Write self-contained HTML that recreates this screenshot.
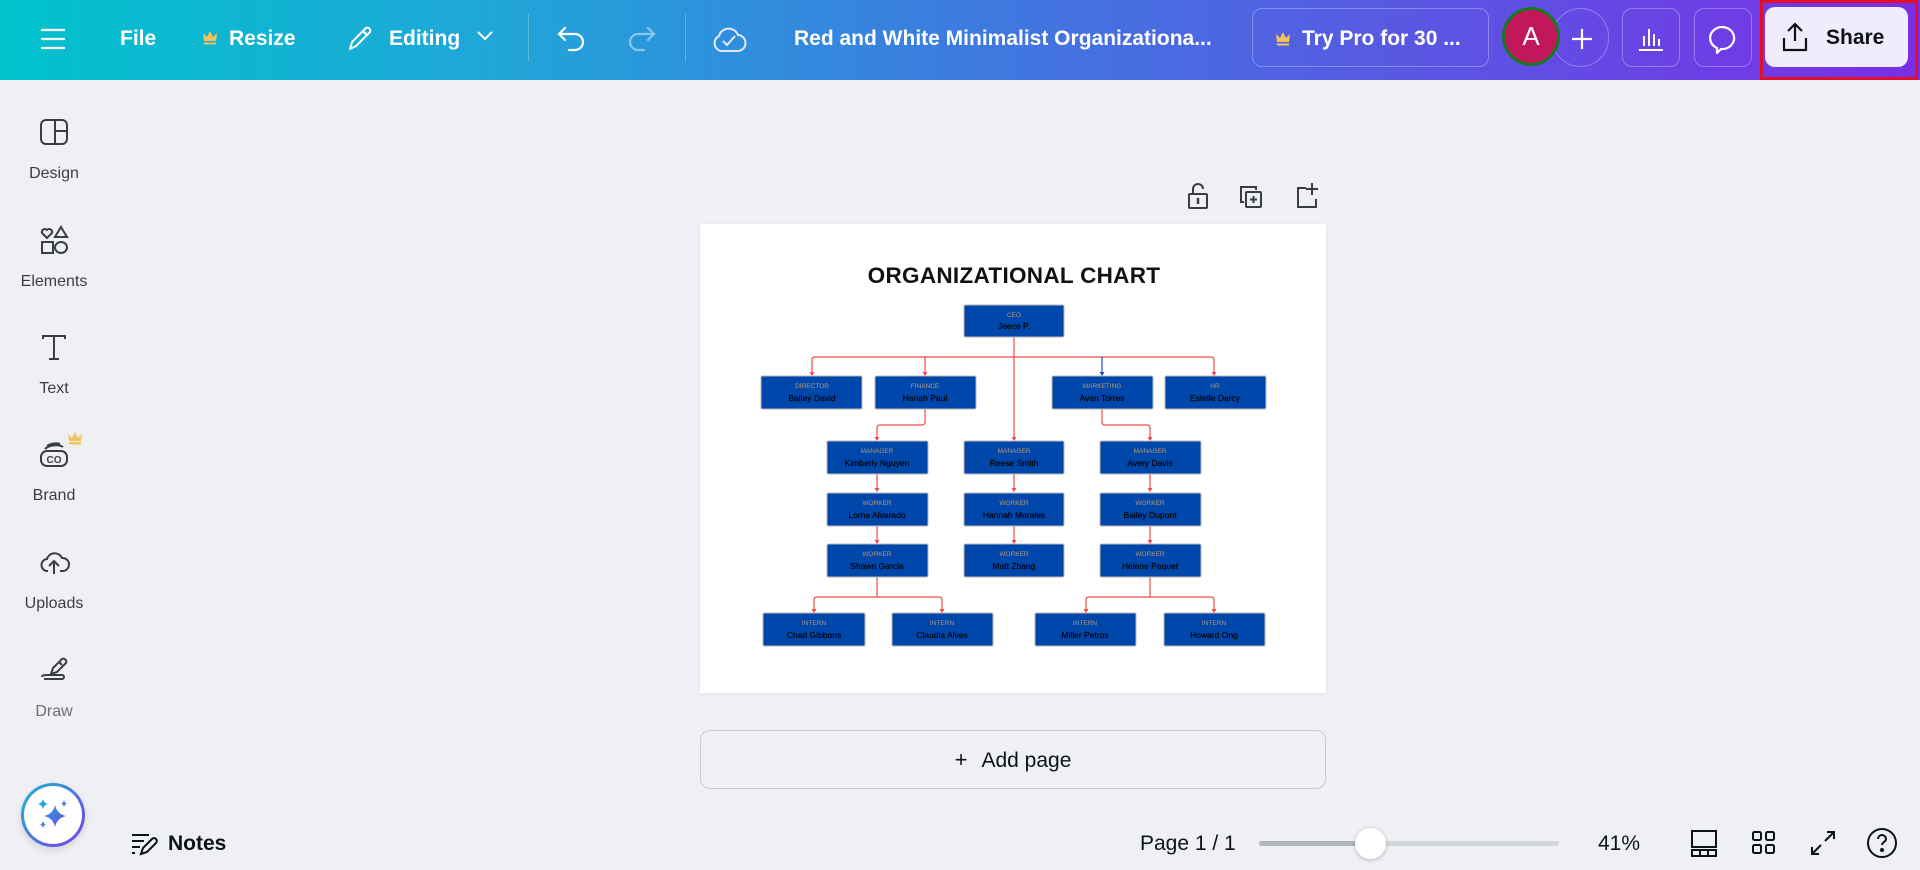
<!DOCTYPE html>
<html><head><meta charset="utf-8"><style>
*{margin:0;padding:0;box-sizing:border-box}
body{width:1920px;height:870px;overflow:hidden;background:#eff0f4;font-family:"Liberation Sans",sans-serif;position:relative;color:#0d1216}
.top{position:absolute;left:0;top:0;width:1920px;height:80px;background:linear-gradient(90deg,#00c2cc 0%,#1fa7d8 25%,#3d7be0 50%,#5b55e3 75%,#7a2ee6 100%)}
.a{position:absolute}
.tt{color:#fff;font-weight:bold;font-size:21px;top:27px}
.side{position:absolute;left:0;width:108px;text-align:center;font-size:16px;color:#3b3d45}
.side svg{display:block;margin:0 auto 17px}
.btn{position:absolute;border:1px solid rgba(255,255,255,.3);border-radius:10px}
</style></head><body>
<div class="top">
 <svg class="a" style="left:40px;top:27px" width="26" height="24" viewBox="0 0 26 24"><path d="M2 3h22M2 12h22M2 21h22" stroke="#fff" stroke-width="2.2" stroke-linecap="round"/></svg>
 <div class="a tt" style="left:120px">File</div>
 <svg class="a" style="left:201px;top:28px" width="18" height="18" viewBox="0 0 18 18"><path d="M2 5l4 4 3-6 3 6 4-4-1 8H3z" fill="#f7c15c"/><rect x="3" y="14.5" width="12" height="2" fill="#f7c15c"/></svg>
 <div class="a tt" style="left:229px">Resize</div>
 <svg class="a" style="left:345px;top:22px" width="32" height="32" viewBox="0 0 32 32"><path d="M5 27l2-7L21 6a3 3 0 014 4L11 24z M18 9l4 4" fill="none" stroke="#fff" stroke-width="2" stroke-linejoin="round"/></svg>
 <div class="a tt" style="left:389px">Editing</div>
 <svg class="a" style="left:475px;top:29px" width="20" height="14" viewBox="0 0 20 14"><path d="M3 3l7 7 7-7" fill="none" stroke="#fff" stroke-width="2"/></svg>
 <div class="a" style="left:528px;top:14px;width:1px;height:48px;background:rgba(255,255,255,.25)"></div>
 <svg class="a" style="left:555px;top:22px" width="34" height="34" viewBox="0 0 34 34"><path d="M10 6L4 12l6 6M4 12h16a8 8 0 010 16h-6" fill="none" stroke="#fff" stroke-width="2.2" stroke-linecap="round"/></svg>
 <svg class="a" style="left:624px;top:22px" width="34" height="34" viewBox="0 0 34 34"><path d="M24 6l6 6-6 6M30 12H14a8 8 0 000 16h6" fill="none" stroke="rgba(255,255,255,.45)" stroke-width="2.2" stroke-linecap="round"/></svg>
 <div class="a" style="left:685px;top:14px;width:1px;height:48px;background:rgba(255,255,255,.25)"></div>
 <svg class="a" style="left:710px;top:20px" width="38" height="38" viewBox="0 0 38 38"><path d="M11 31a8 8 0 01-2-15 10 10 0 0119-1 8 8 0 01-1 16z" fill="none" stroke="#e6e8ff" stroke-width="2"/><path d="M13 21l4 4 8-9" fill="none" stroke="#e6e8ff" stroke-width="2"/></svg>
 <div class="a tt" style="left:794px;font-size:21px">Red and White Minimalist Organizationa...</div>
 <div class="btn" style="left:1252px;top:8px;width:237px;height:59px"></div>
 <svg class="a" style="left:1274px;top:29px" width="18" height="18" viewBox="0 0 18 18"><path d="M2 5l4 4 3-6 3 6 4-4-1 8H3z" fill="#f7c15c"/><rect x="3" y="14.5" width="12" height="2" fill="#f7c15c"/></svg>
 <div class="a tt" style="left:1302px">Try Pro for 30 ...</div>
 <div class="btn" style="left:1552px;top:8px;width:57px;height:59px;border-radius:30px"></div>
 <div class="a" style="left:1502px;top:7px;width:58px;height:59px;border-radius:50%;background:#c2185b;border:3px solid #137a22;color:#fff;font-size:26px;text-align:center;line-height:53px">A</div>
 <svg class="a" style="left:1568px;top:25px" width="28" height="28" viewBox="0 0 28 28"><path d="M14 4v20M4 14h20" stroke="#fff" stroke-width="2.2"/></svg>
 <div class="btn" style="left:1622px;top:8px;width:58px;height:59px"></div>
 <svg class="a" style="left:1636px;top:23px" width="30" height="30" viewBox="0 0 30 30"><path d="M3 27h24M8 23V13M13 23V6M18 23V11M23 23V16" stroke="#fff" stroke-width="2"/></svg>
 <div class="btn" style="left:1694px;top:8px;width:58px;height:59px"></div>
 <svg class="a" style="left:1707px;top:21px" width="32" height="34" viewBox="0 0 32 34"><path d="M10 27a12 11 0 1 1 4 1l-4 4z" fill="none" stroke="#fff" stroke-width="2.2" stroke-linejoin="round"/></svg>
 <div class="a" style="left:1760px;top:0;width:158px;height:80px;border:3px solid #e0102a"></div>
 <div class="a" style="left:1765px;top:7px;width:143px;height:60px;background:#f0ecfb;border-radius:10px"></div>
 <svg class="a" style="left:1780px;top:21px" width="30" height="32" viewBox="0 0 30 32"><path d="M15 20V3M8 10l7-7 7 7M4 17v12h22V17" fill="none" stroke="#0d1216" stroke-width="2.2"/></svg>
 <div class="a" style="left:1826px;top:26px;font-size:21px;font-weight:bold;color:#0d1216">Share</div>
</div>

<div class="side" style="top:116px"><svg width="32" height="32" viewBox="0 0 32 32"><rect x="3" y="4" width="26" height="24" rx="5" fill="none" stroke="#3b3d45" stroke-width="2"/><path d="M17 4v24M17 15h12" stroke="#3b3d45" stroke-width="2"/></svg>Design</div>
<div class="side" style="top:224px"><svg width="32" height="32" viewBox="0 0 32 32" fill="none" stroke="#3b3d45" stroke-width="2"><path d="M9 14l-5-5a3 3 0 015-3 3 3 0 015 3z"/><path d="M23 3l6 10H17z"/><rect x="4" y="18" width="11" height="11"/><ellipse cx="23" cy="23.5" rx="6" ry="5.5"/></svg>Elements</div>
<div class="side" style="top:331px"><svg width="32" height="32" viewBox="0 0 32 32" fill="none" stroke="#3b3d45" stroke-width="2"><path d="M5 8V5h22v3M16 5v23M11 28h10"/></svg>Text</div>
<div class="side" style="top:438px"><svg width="32" height="32" viewBox="0 0 32 32" fill="none" stroke="#3b3d45" stroke-width="2"><rect x="3" y="13" width="26" height="15" rx="6"/><path d="M7 11c4-4 14-5 18-2M9 8c4-3 10-3 13-2"/><text x="16" y="25" font-size="10" text-anchor="middle" stroke="none" fill="#3b3d45" font-family="Liberation Sans" font-weight="bold">CO</text></svg>Brand</div>
<svg class="a" style="left:66px;top:430px" width="18" height="16" viewBox="0 0 18 16"><path d="M2 4l4 4 3-6 3 6 4-4-1 7H3z" fill="#f7c15c"/><rect x="3" y="12" width="12" height="2.5" fill="#f7c15c"/></svg>
<div class="side" style="top:546px"><svg width="32" height="32" viewBox="0 0 32 32" fill="none" stroke="#3b3d45" stroke-width="2"><path d="M10 25a6 6 0 01-1-12 8 8 0 0115-1 6 6 0 011 13h-3"/><path d="M16 28V16M11 20l5-5 5 5"/></svg>Uploads</div>
<div class="side" style="top:654px;color:#6b6e77"><svg width="32" height="32" viewBox="0 0 32 32" fill="none" stroke="#3b3d45" stroke-width="2"><path d="M13 20l2-6 9-9a3 3 0 014 4l-9 9zM21 8l3 3"/><path d="M4 23c0-2 3-2 4-2h16a2 2 0 010 4H6"/></svg>Draw</div>
<div class="a" style="left:21px;top:783px;width:64px;height:64px;border-radius:50%;background:linear-gradient(135deg,#1ab6d6,#7a3ee6);box-shadow:0 3px 8px rgba(0,0,0,.12)"><div style="position:absolute;left:3px;top:3px;width:58px;height:58px;border-radius:50%;background:#fff"></div>
<svg class="a" style="left:12px;top:12px" width="40" height="40" viewBox="0 0 40 40"><defs><linearGradient id="g" x1="0" y1="0" x2="1" y2="1"><stop offset="0" stop-color="#2aa6d8"/><stop offset="1" stop-color="#6b48e6"/></linearGradient></defs><path d="M22 10q2 9 11 11q-9 2-11 11q-2-9-11-11q9-2 11-11z" fill="url(#g)"/><path d="M10 4q1 4 5 5q-4 1-5 5q-1-4-5-5q4-1 5-5z" fill="#2aa6d8"/><path d="M31 5q.8 3 3 3.5q-2.2.7-3 3.5q-.8-2.8-3-3.5q2.2-.5 3-3.5z" fill="#4b7fe0"/><path d="M10 26q.8 3 3 3.5q-2.2.7-3 3.5q-.8-2.8-3-3.5q2.2-.5 3-3.5z" fill="#4b7fe0"/></svg></div>

<svg class="a" style="left:1186px;top:182px" width="24" height="28" viewBox="0 0 24 28" fill="none" stroke="#3b3d45" stroke-width="2"><rect x="3" y="12" width="18" height="14" rx="1"/><path d="M7 12V7a5 5 0 0110 0"/><path d="M12 16v6" stroke-width="2.5"/></svg>
<svg class="a" style="left:1238px;top:184px" width="26" height="26" viewBox="0 0 26 26" fill="none" stroke="#3b3d45" stroke-width="2"><path d="M6 18H3V3h15v3"/><rect x="8" y="8" width="15" height="15" rx="1"/><path d="M15.5 12v7M12 15.5h7"/></svg>
<svg class="a" style="left:1294px;top:182px" width="26" height="28" viewBox="0 0 26 28" fill="none" stroke="#3b3d45" stroke-width="2"><path d="M12 6H4v19h18v-8"/><path d="M18 1v12M12 7h12"/></svg>

<div class="a" style="left:700px;top:224px;width:626px;height:469px;background:#fff;box-shadow:0 1px 4px rgba(0,0,0,.06)"></div>
<svg class="a" style="left:700px;top:224px" width="626" height="469" viewBox="700 224 626 469" font-family="Liberation Sans">
<text x="1014" y="283" font-size="22.5" font-weight="bold" text-anchor="middle" fill="#111" letter-spacing="0.3">ORGANIZATIONAL CHART</text>
<g stroke="#f24a4a" stroke-width="1.2" fill="none">
<path d="M812 375V360q0-3 3-3H1211q3 0 3 3V375"/><path d="M925 357V375"/><path d="M1014 336V440"/>
<path d="M925 409V422q0 3-3 3H880q-3 0-3 3V440"/><path d="M1102 409V422q0 3 3 3H1147q3 0 3 3V440"/>
<path d="M877 474V491M1014 474V491M1150 474V491M877 525V543M1014 525V543M1150 525V543"/>
<path d="M877 577V597M814 612V600q0-3 3-3H939q3 0 3 3V612"/><path d="M1150 577V597M1086 612V600q0-3 3-3H1211q3 0 3 3V612"/>
</g>
<path d="M1102 357V374" stroke="#1a4fb5" stroke-width="1.2"/>
<g fill="#f24a4a"><path d="M809.5 372h5l-2.5 4z"/><path d="M922.5 372h5l-2.5 4z"/><path d="M1211.5 372h5l-2.5 4z"/><path d="M1011.5 437h5l-2.5 4z"/><path d="M874.5 437h5l-2.5 4z"/><path d="M1147.5 437h5l-2.5 4z"/>
<path d="M874.5 488h5l-2.5 4zM1011.5 488h5l-2.5 4zM1147.5 488h5l-2.5 4zM874.5 540h5l-2.5 4zM1011.5 540h5l-2.5 4zM1147.5 540h5l-2.5 4zM811.5 609h5l-2.5 4zM939.5 609h5l-2.5 4zM1083.5 609h5l-2.5 4zM1211.5 609h5l-2.5 4z"/></g>
<path d="M1099.5 372h5l-2.5 4z" fill="#1a4fb5"/>
<g font-size="8.5" text-anchor="middle">
<g stroke="#b9b4b4" stroke-width="1" fill="#0047ab">
<rect x="964" y="305" width="100" height="32" rx="1.5"/>
<rect x="761" y="376" width="101" height="33" rx="1.5"/><rect x="875" y="376" width="101" height="33" rx="1.5"/><rect x="1052" y="376" width="101" height="33" rx="1.5"/><rect x="1165" y="376" width="101" height="33" rx="1.5"/>
<rect x="827" y="441" width="101" height="33" rx="1.5"/><rect x="964" y="441" width="100" height="33" rx="1.5"/><rect x="1100" y="441" width="101" height="33" rx="1.5"/>
<rect x="827" y="493" width="101" height="33" rx="1.5"/><rect x="964" y="493" width="100" height="33" rx="1.5"/><rect x="1100" y="493" width="101" height="33" rx="1.5"/>
<rect x="827" y="544" width="101" height="33" rx="1.5"/><rect x="964" y="544" width="100" height="33" rx="1.5"/><rect x="1100" y="544" width="101" height="33" rx="1.5"/>
<rect x="763" y="613" width="102" height="33" rx="1.5"/><rect x="892" y="613" width="101" height="33" rx="1.5"/><rect x="1035" y="613" width="101" height="33" rx="1.5"/><rect x="1164" y="613" width="101" height="33" rx="1.5"/>
</g>
<g fill="#b89677" font-size="6.5">
<text x="1014" y="317">CEO</text>
<text x="812" y="388">DIRECTOR</text><text x="925" y="388">FINANCE</text><text x="1102" y="388">MARKETING</text><text x="1215" y="388">HR</text>
<text x="877" y="453">MANAGER</text><text x="1014" y="453">MANAGER</text><text x="1150" y="453">MANAGER</text>
<text x="877" y="505">WORKER</text><text x="1014" y="505">WORKER</text><text x="1150" y="505">WORKER</text>
<text x="877" y="556">WORKER</text><text x="1014" y="556">WORKER</text><text x="1150" y="556">WORKER</text>
<text x="814" y="625">INTERN</text><text x="942" y="625">INTERN</text><text x="1085" y="625">INTERN</text><text x="1214" y="625">INTERN</text>
</g>
<g fill="#000" stroke="#000" stroke-width="0.15">
<text x="1014" y="329">Jeece P.</text>
<text x="812" y="401">Bailey David</text><text x="925" y="401">Hanah Paul</text><text x="1102" y="401">Avan Torres</text><text x="1215" y="401">Estelle Darcy</text>
<text x="877" y="466">Kimberly Nguyen</text><text x="1014" y="466">Reese Smith</text><text x="1150" y="466">Avery Davis</text>
<text x="877" y="518">Lorna Alvarado</text><text x="1014" y="518">Hannah Morales</text><text x="1150" y="518">Bailey Dupont</text>
<text x="877" y="569">Shawn Garcia</text><text x="1014" y="569">Matt Zhang</text><text x="1150" y="569">Helene Paquet</text>
<text x="814" y="638">Chad Gibbons</text><text x="942" y="638">Claudia Alves</text><text x="1085" y="638">Miller  Petros</text><text x="1214" y="638">Howard Ong</text>
</g></g>
</svg>

<div class="a" style="left:700px;top:730px;width:626px;height:59px;border:1px solid #c9cbd1;border-radius:10px;text-align:center;line-height:57px;font-size:21px;color:#0d1216"><span style="font-size:22px;margin-right:14px">+</span>Add page</div>

<svg class="a" style="left:131px;top:831px" width="28" height="26" viewBox="0 0 28 26" fill="none" stroke="#0d1216" stroke-width="2"><path d="M1 4h17M1 10h12M1 16h8M1 22h3"/><path d="M10 23l2-6 9-9a2.5 2.5 0 014 4l-9 9z"/></svg>
<div class="a" style="left:168px;top:832px;font-size:21px;font-weight:bold">Notes</div>
<div class="a" style="left:1140px;top:832px;font-size:21px">Page 1 / 1</div>
<div class="a" style="left:1259px;top:841px;width:300px;height:5px;border-radius:3px;background:#d4d6dd"></div>
<div class="a" style="left:1259px;top:841px;width:111px;height:5px;border-radius:3px;background:#b1b6bf"></div>
<div class="a" style="left:1355px;top:828px;width:31px;height:31px;border-radius:50%;background:#fff;box-shadow:0 1px 4px rgba(0,0,0,.25)"></div>
<div class="a" style="left:1598px;top:832px;font-size:21px">41%</div>
<svg class="a" style="left:1690px;top:829px" width="28" height="28" viewBox="0 0 28 28" fill="none" stroke="#0d1216" stroke-width="2"><rect x="2" y="2" width="24" height="16"/><rect x="2" y="21" width="24" height="6"/><path d="M10 21v6M18 21v6"/></svg>
<svg class="a" style="left:1751px;top:830px" width="26" height="26" viewBox="0 0 26 26" fill="none" stroke="#0d1216" stroke-width="2"><rect x="2" y="2" width="8" height="8" rx="1.5"/><rect x="15" y="2" width="8" height="8" rx="1.5"/><rect x="2" y="15" width="8" height="8" rx="1.5"/><rect x="15" y="15" width="8" height="8" rx="1.5"/></svg>
<svg class="a" style="left:1810px;top:830px" width="26" height="26" viewBox="0 0 26 26" fill="none" stroke="#0d1216" stroke-width="2"><path d="M15 11l9-9M17 2h7v7M11 15l-9 9M2 17v7h7"/></svg>
<svg class="a" style="left:1866px;top:827px" width="32" height="32" viewBox="0 0 32 32" fill="none" stroke="#0d1216" stroke-width="2"><ellipse cx="16" cy="16" rx="14" ry="14"/><path d="M12 12a4 4 0 118 0c0 3-4 3-4 6"/><circle cx="16" cy="23" r="1" fill="#0d1216"/></svg>
</body></html>
